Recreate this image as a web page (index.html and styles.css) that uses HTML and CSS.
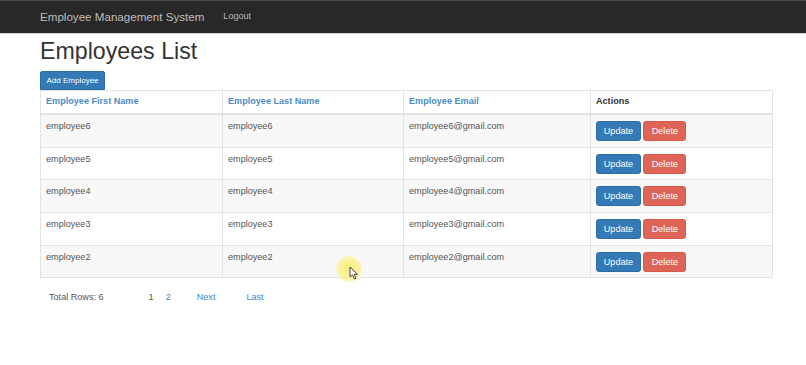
FILE: index.html
```html
<!DOCTYPE html>
<html lang="en">
<head>
    <meta charset="UTF-8">
    <meta name="viewport" content="width=device-width, initial-scale=1.0">
    <title>Employees List</title>
    <link rel="stylesheet" href="styles.css">
</head>
<body>
    <nav class="navbar">
        <a href="#" class="brand">Employee Management System</a>
        <a href="#" class="nav-link">Logout</a>
    </nav>

    <div class="container">
        <h1>Employees List</h1>
        <button class="btn btn-primary btn-add">Add Employee</button>

        <table class="emp-table">
            <thead>
                <tr>
                    <th class="col-first"><a href="#">Employee First Name</a></th>
                    <th class="col-last"><a href="#">Employee Last Name</a></th>
                    <th class="col-email"><a href="#">Employee Email</a></th>
                    <th>Actions</th>
                </tr>
            </thead>
            <tbody>
                <tr>
                    <td>employee6</td>
                    <td>employee6</td>
                    <td>employee6@gmail.com</td>
                    <td><button class="btn btn-primary">Update</button> <button class="btn btn-danger">Delete</button></td>
                </tr>
                <tr>
                    <td>employee5</td>
                    <td>employee5</td>
                    <td>employee5@gmail.com</td>
                    <td><button class="btn btn-primary">Update</button> <button class="btn btn-danger">Delete</button></td>
                </tr>
                <tr>
                    <td>employee4</td>
                    <td>employee4</td>
                    <td>employee4@gmail.com</td>
                    <td><button class="btn btn-primary">Update</button> <button class="btn btn-danger">Delete</button></td>
                </tr>
                <tr>
                    <td>employee3</td>
                    <td>employee3</td>
                    <td>employee3@gmail.com</td>
                    <td><button class="btn btn-primary">Update</button> <button class="btn btn-danger">Delete</button></td>
                </tr>
                <tr>
                    <td>employee2</td>
                    <td>employee2</td>
                    <td>employee2@gmail.com</td>
                    <td><button class="btn btn-primary">Update</button> <button class="btn btn-danger">Delete</button></td>
                </tr>
            </tbody>
        </table>

        <div class="pager">
            <span class="total">Total Rows: 6</span>
            <span class="page current">1</span>
            <a href="#" class="page">2</a>
            <a href="#" class="next">Next</a>
            <a href="#" class="last">Last</a>
        </div>
    </div>

    <!-- mouse pointer highlight from the recording -->
    <div class="cursor">
        <svg width="10" height="14" viewBox="0 0 10 14">
            <path d="M1 1 L1 11 L3.5 8.8 L5.4 13 L7 12.3 L5.2 8.2 L8.5 8.2 Z" fill="#fff" stroke="#333" stroke-width="0.9" stroke-linejoin="round"/>
        </svg>
    </div>
</body>
</html>
```

FILE: styles.css
```css
body {
    font-family: "Liberation Sans", Arial, sans-serif;
    margin: 0;
    background-color: #fff;
    color: #333;
    font-size: 9.1px;
    line-height: 1.46;
}
a {
    text-decoration: none;
}
.navbar {
    height: 32px;
    background-color: #282828;
    border-top: 1px solid #4c4c4c;
    border-bottom: 1px solid #d2d2d2;
    display: flex;
    align-items: center;
    padding-left: 40px;
}
.brand {
    color: #bdbdbd;
    font-size: 11.6px;
    margin-right: 19px;
}
.nav-link {
    color: #b5b5b5;
    font-size: 9.1px;
}
.container {
    width: 733px;
    margin: 0 40px;
}
h1 {
    font-size: 23.2px;
    font-weight: 400;
    line-height: 1.1;
    margin: 5px 0 6px;
    color: #333;
}
.btn {
    font-family: inherit;
    font-size: 9.1px;
    color: #fff;
    border: 1px solid transparent;
    border-radius: 2.7px;
    height: 20px;
    padding: 0 6.8px;
    margin-top: 1px;
    cursor: pointer;
}
.btn-primary {
    background-color: #337ab7;
    border-color: #2e6da4;
}
.btn-danger {
    background-color: #de6457;
    border-color: #d9584b;
    padding: 0 7.3px;
}
.btn-add {
    display: block;
    height: 19px;
    margin: 0;
    padding: 0 5.5px;
    font-size: 8px;
    border-radius: 2px 2px 0 0;
}
.emp-table {
    width: 733px;
    border-collapse: collapse;
    border: 1px solid #cfcfcf;
}
.emp-table th,
.emp-table td {
    text-align: left;
    vertical-align: top;
    border: 1px solid #e3e3e3;
}
.emp-table th {
    padding: 4.5px 5px 5px;
    font-weight: 700;
    border-bottom: 2px solid #e3e3e3;
}
.emp-table th a {
    color: #4a8dc3;
}
.emp-table td {
    padding: 5px 5px 5.6px;
    color: #555;
}
.emp-table tbody tr:nth-child(odd) {
    background-color: #f8f8f8;
}
.col-first { width: 171px; }
.col-last { width: 170px; }
.col-email { width: 176px; }
.pager {
    display: flex;
    padding: 13px 0 0 9px;
    color: #555;
}
.total {
    margin-right: 45px;
}
.page {
    margin-right: 12px;
}
.pager a {
    color: #3d84bf;
}
.next {
    margin-left: 14px;
    margin-right: 31px;
}
.cursor {
    position: absolute;
    left: 336px;
    top: 256px;
    width: 26px;
    height: 26px;
    border-radius: 50%;
    background: radial-gradient(circle, rgba(250, 238, 110, 0.95) 0%, rgba(250, 240, 130, 0.7) 55%, rgba(255, 250, 200, 0) 100%);
}
.cursor svg {
    position: absolute;
    left: 13px;
    top: 10px;
}
```
